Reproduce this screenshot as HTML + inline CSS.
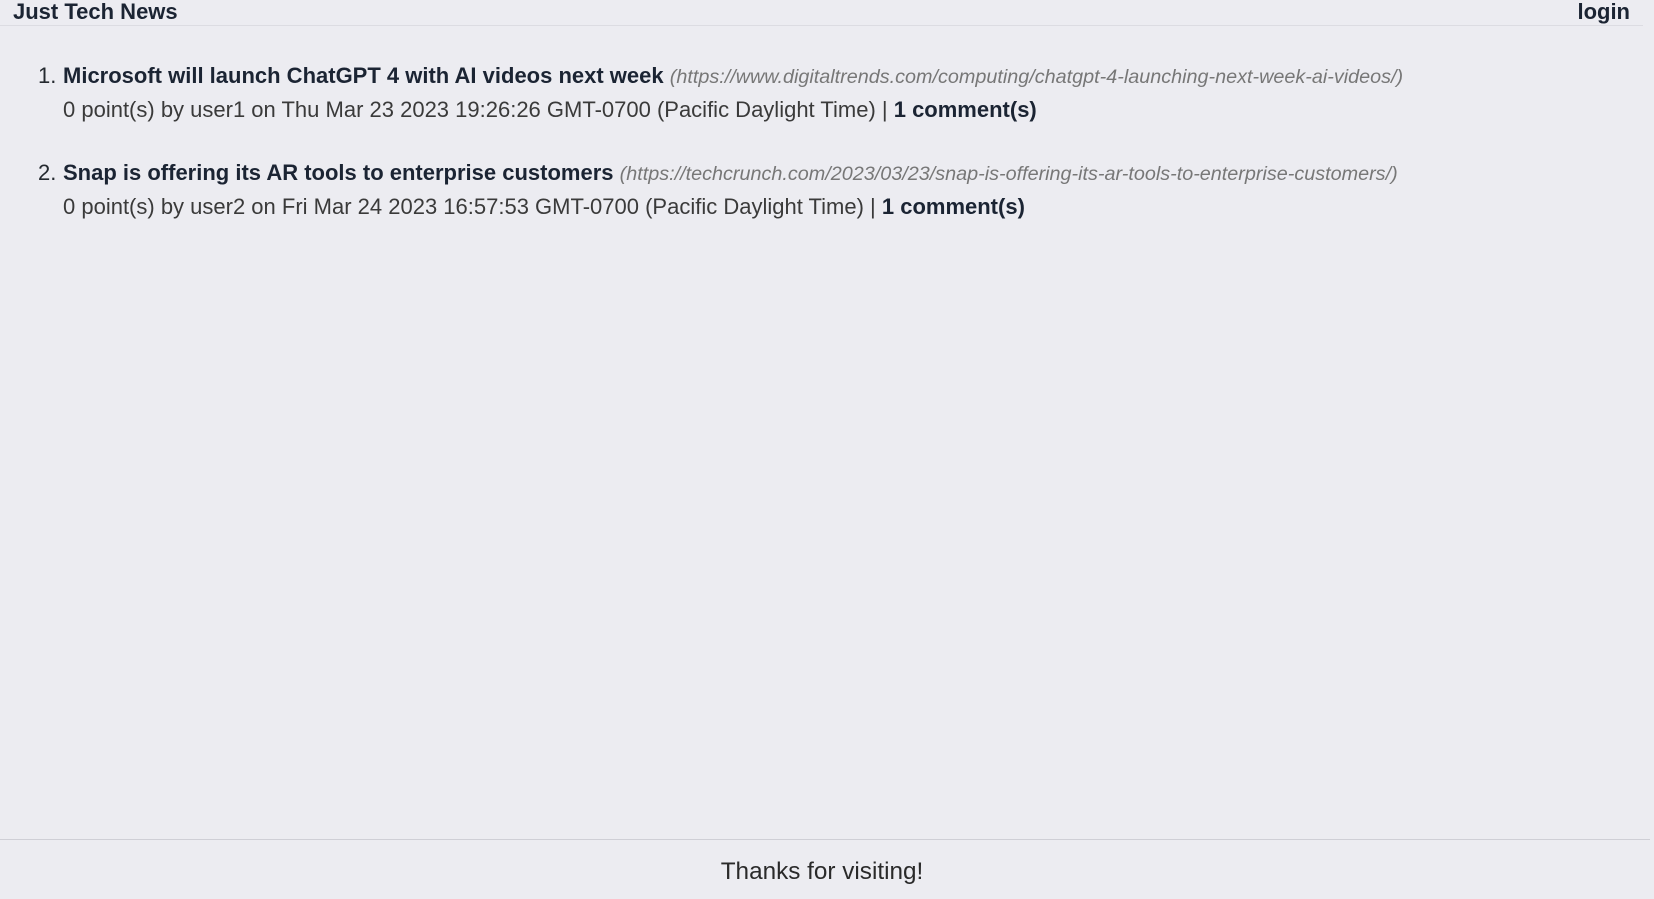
<!DOCTYPE html>
<html><head><meta charset="utf-8"><style>
html,body{margin:0;padding:0;width:1654px;height:899px;background:#ececf1;font-family:"Liberation Sans",Arial,sans-serif;color:#24292f;overflow:hidden;position:relative}
.hdr{position:absolute;left:0;top:0;width:1643px;height:25px;border-bottom:1px solid #dcdce2}
.logo{position:absolute;left:13px;top:-1px;font-weight:bold;font-size:22px;color:#1b2433;line-height:26px}
.login{position:absolute;right:13px;top:-1px;font-weight:bold;font-size:22px;color:#1b2433;line-height:26px}
.item{position:absolute;left:0;font-size:22px;line-height:34px;white-space:nowrap}
.num{position:absolute;left:38px;width:24px;color:#24292f}
.t{position:absolute;left:63px;}
.t b{color:#1b2433}
.url{font-style:italic;color:#777;font-size:19.8px}
.meta{position:absolute;left:63px;top:34px;color:#3a3a3a}
.meta b{color:#1b2433}
.foot{position:absolute;left:0;top:839px;width:1650px;border-top:1px solid #cfcfd6}
.ft{position:absolute;left:0;width:1644px;top:857px;text-align:center;font-size:24.3px;color:#2a2a2a;line-height:30px}
</style></head><body>
<div class="hdr"><div class="logo">Just Tech News</div><div class="login">login</div></div>
<div class="item" style="top:59px"><span class="num">1.</span><span class="t"><b>Microsoft will launch ChatGPT 4 with AI videos next week</b> <span class="url">(https://www.digitaltrends.com/computing/chatgpt-4-launching-next-week-ai-videos/)</span></span>
<div class="meta">0 point(s) by user1 on Thu Mar 23 2023 19:26:26 GMT-0700 (Pacific Daylight Time) | <b>1 comment(s)</b></div></div>
<div class="item" style="top:156px"><span class="num">2.</span><span class="t"><b>Snap is offering its AR tools to enterprise customers</b> <span class="url">(https://techcrunch.com/2023/03/23/snap-is-offering-its-ar-tools-to-enterprise-customers/)</span></span>
<div class="meta">0 point(s) by user2 on Fri Mar 24 2023 16:57:53 GMT-0700 (Pacific Daylight Time) | <b>1 comment(s)</b></div></div>
<div class="foot"></div>
<div class="ft">Thanks for visiting!</div>
</body></html>
